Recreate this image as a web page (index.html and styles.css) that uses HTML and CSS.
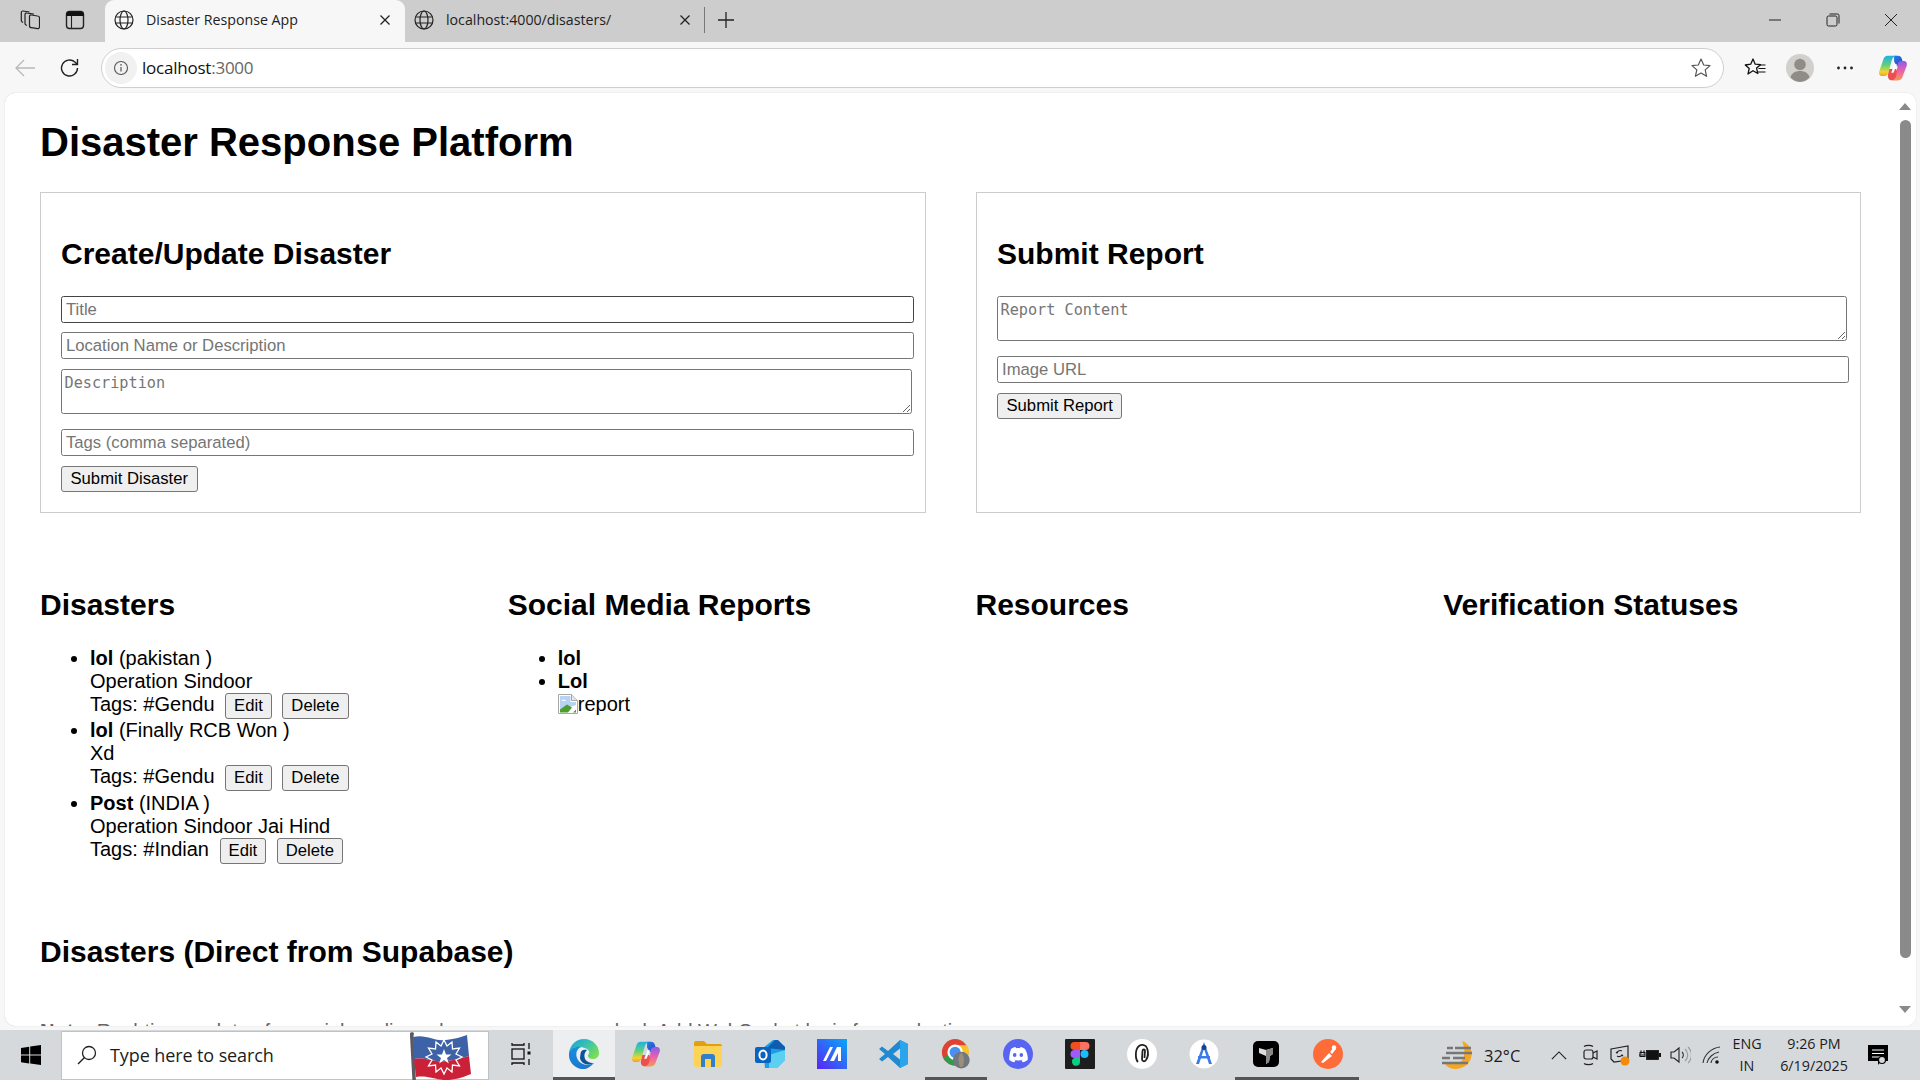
FILE: index.html
```html
<!DOCTYPE html>
<html lang="en">
<head>
<meta charset="utf-8">
<title>Disaster Response App</title>
<link rel="stylesheet" href="styles.css">
</head>
<body>
<svg class="defs" width="0" height="0" aria-hidden="true">
  <defs>
    <symbol id="globe" viewBox="0 0 20 20"><g fill="none" stroke="#222" stroke-width="1.2"><circle cx="10" cy="10" r="9"/><ellipse cx="10" cy="10" rx="4" ry="9"/><path d="M1.5 7h17M1.5 13h17"/></g></symbol>
    <symbol id="x" viewBox="0 0 12 12"><path d="M1.5 1.5l9 9M10.5 1.5l-9 9" fill="none" stroke="#222" stroke-width="1.3"/></symbol>
    <linearGradient id="cpL" x1="0" y1="0" x2="0" y2="1"><stop offset="0" stop-color="#1fb0e8"/><stop offset=".45" stop-color="#5fd07a"/><stop offset=".8" stop-color="#f2d52e"/><stop offset="1" stop-color="#f59a30"/></linearGradient>
    <linearGradient id="cpT" x1="0" y1="0" x2="1" y2="1"><stop offset="0" stop-color="#2a7de8"/><stop offset="1" stop-color="#2340c0"/></linearGradient>
    <linearGradient id="cpR" x1="0" y1="0" x2="0" y2="1"><stop offset="0" stop-color="#8a5ce8"/><stop offset=".5" stop-color="#e860b0"/><stop offset="1" stop-color="#f89a50"/></linearGradient>
    <symbol id="copilot" viewBox="0 0 28 28">
      <path d="M15 2.500h3.500c2 0 3.200 1 3.800 3l2 6.500h-7L15 8z" fill="url(#cpT)"/>
      <path d="M10 15h7l2.800 7c.8 2 0 3.500-2 3.500h-5.300c-2 0-3-1.500-3.300-3.500z" fill="#ec4f4f"/>
      <path d="M9 2.500h9c-3 0-4 1.500-5 4L9.500 19c-.5 1.500-1.500 2.500-3.500 2.500H4c-2.500 0-3.500-2-2.800-4.500L5 6c.7-2.300 2-3.500 4-3.500z" fill="url(#cpL)"/>
      <path d="M19 25.500h-7c3 0 4-1.500 5-4L18.500 10c.5-1.500 1.500-2.500 3.500-2.500h2c2.500 0 3.500 2 2.800 4.500L23 22c-.7 2.300-2 3.500-4 3.500z" fill="url(#cpR)"/>
      <path d="M15.500 10.500h2.200L14.500 18.500h-2.200z" fill="#fff"/>
    </symbol>
  </defs>
</svg>

<div class="tabbar">
  <div class="tabtools">
    <svg class="ico20" viewBox="0 0 20 20"><g fill="none" stroke="#222" stroke-width="1.2" stroke-linejoin="round"><path d="M9.500 6.500a1.500 1.500 0 0 1 1.800-1.500l6.200 1a2 2 0 0 1 2 2v8.500a2 2 0 0 1-2 2.200l-6-1a2 2 0 0 1-2-2z"/><path d="M6.800 15.500l-.8-.5a2 2 0 0 1-1-1.500V4.500a1.500 1.500 0 0 1 1.800-1.500l7 1.200"/><path d="M3 12.500l-1-.7a1.500 1.500 0 0 1-.7-1.300V2.500A1.500 1.500 0 0 1 3 1l6.500 1"/></g></svg>
    <svg class="ico20" viewBox="0 0 20 20"><rect x="1.500" y="1.500" width="17" height="17" rx="3" fill="none" stroke="#222" stroke-width="1.400"/><path d="M1.500 4.500a3 3 0 0 1 3-3h11a3 3 0 0 1 3 3v1.500h-17z" fill="#111"/><path d="M6.500 6v12" stroke="#222" stroke-width="1.100"/></svg>
  </div>
  <div class="tab tab-active">
    <svg class="ico20"><use href="#globe"/></svg>
    <span class="tab-title">Disaster Response App</span>
    <svg class="tabclose"><use href="#x"/></svg>
  </div>
  <div class="tab">
    <svg class="ico20"><use href="#globe"/></svg>
    <span class="tab-title">localhost:4000/disasters/</span>
    <svg class="tabclose"><use href="#x"/></svg>
  </div>
  <div class="tabsep"></div>
  <svg class="newtab" viewBox="0 0 18 18"><path d="M9 1v16M1 9h16" stroke="#222" stroke-width="1.300" fill="none"/></svg>
  <div class="winctl">
    <svg viewBox="0 0 14 14"><path d="M1 7h12" stroke="#222" stroke-width="1"/></svg>
    <svg viewBox="0 0 14 14"><g fill="none" stroke="#222" stroke-width="1"><rect x="1" y="3" width="10" height="10" rx="1.500"/><path d="M3.500 1h8a1.500 1.500 0 0 1 1.500 1.500v8"/></g></svg>
    <svg viewBox="0 0 14 14"><path d="M1 1l12 12M13 1L1 13" stroke="#222" stroke-width="1" fill="none"/></svg>
  </div>
</div>

<div class="toolbar">
  <svg class="tool tool-back" viewBox="0 0 22 22"><path d="M21 11H2M10 3l-8 8 8 8" fill="none" stroke="#b9b9b9" stroke-width="1.300"/></svg>
  <svg class="tool tool-reload" viewBox="0 0 22 22"><path d="M18.500 11a8 8 0 1 1-2.600-5.900L18.500 7.500M18.500 2v5.500H13" fill="none" stroke="#222" stroke-width="1.400"/></svg>
  <div class="omnibox">
    <span class="siteinfo"><svg viewBox="0 0 16 16"><circle cx="8" cy="8" r="6.500" fill="none" stroke="#555" stroke-width="1.100"/><path d="M8 7v4.500" stroke="#555" stroke-width="1.200"/><circle cx="8" cy="4.900" r=".8" fill="#555"/></svg></span>
    <span class="url">localhost<span class="url-port">:3000</span></span>
    <svg class="omni-star" viewBox="0 0 22 22"><path d="M11 2l2.700 6 6.300.6-4.800 4.300 1.400 6.400L11 16l-5.600 3.300 1.400-6.400L2 8.600 8.300 8z" fill="none" stroke="#555" stroke-width="1.200" stroke-linejoin="round"/></svg>
  </div>
  <div class="tool-right">
    <svg class="tr-fav" viewBox="0 0 22 22"><path d="M9 2l2.200 5.200 5.300.5-3.900 3.400 1.200 5.400L9 13.700 4 17l1.200-5.400L1.300 8l5.400-.8z" fill="none" stroke="#111" stroke-width="1.300" stroke-linejoin="round"/><path d="M15 8h6.500M14.500 11.500h7M14 15h7.500" stroke="#111" stroke-width="1.200"/></svg>
    <svg class="tr-profile" viewBox="0 0 28 28"><circle cx="14" cy="14" r="14" fill="#d2d0cc"/><circle cx="14" cy="10.500" r="5.800" fill="#8f8c87"/><path d="M4.500 23.500c1-4.500 5-6.500 9.500-6.500s8.500 2 9.500 6.500A14 14 0 0 1 14 28a14 14 0 0 1-9.500-4.500z" fill="#8f8c87"/></svg>
    <svg class="tr-dots" viewBox="0 0 18 4"><circle cx="2.500" cy="2" r="1.400" fill="#222"/><circle cx="9" cy="2" r="1.400" fill="#222"/><circle cx="15.500" cy="2" r="1.400" fill="#222"/></svg>
    <svg class="tr-copilot"><use href="#copilot"/></svg>
  </div>
</div>

<div class="viewport">
  <main class="page">
    <h1 class="page-title">Disaster Response Platform</h1>
    <div class="forms">
      <section class="card">
        <h2 class="card-title">Create/Update Disaster</h2>
        <input class="field field-dark" placeholder="Title">
        <input class="field" placeholder="Location Name or Description">
        <textarea class="area area-after" placeholder="Description"></textarea>
        <input class="field" placeholder="Tags (comma separated)">
        <button class="btn" type="button">Submit Disaster</button>
      </section>
      <section class="card">
        <h2 class="card-title">Submit Report</h2>
        <textarea class="area" placeholder="Report Content"></textarea>
        <input class="field" placeholder="Image URL">
        <button class="btn" type="button">Submit Report</button>
      </section>
    </div>
    <div class="columns">
      <section>
        <h2 class="col-title">Disasters</h2>
        <ul class="list list-actions">
          <li><strong>lol</strong> (pakistan )<br>Operation Sindoor<br>Tags: #Gendu <button class="btn btn-inline" type="button">Edit</button> <button class="btn btn-inline" type="button">Delete</button></li>
          <li><strong>lol</strong> (Finally RCB Won )<br>Xd<br>Tags: #Gendu <button class="btn btn-inline" type="button">Edit</button> <button class="btn btn-inline" type="button">Delete</button></li>
          <li><strong>Post</strong> (INDIA )<br>Operation Sindoor Jai Hind<br>Tags: #Indian <button class="btn btn-inline" type="button">Edit</button> <button class="btn btn-inline" type="button">Delete</button></li>
        </ul>
      </section>
      <section>
        <h2 class="col-title">Social Media Reports</h2>
        <ul class="list">
          <li><strong>lol</strong></li>
          <li><strong>Lol</strong><br><svg class="broken" viewBox="0 0 20 20"><path d="M.5.500h13l6 6v13H.5z" fill="#fff" stroke="#a8a8a8"/><path d="M13.500.500v6h6" fill="#e4e4e4" stroke="#a8a8a8"/><path d="M2 2h10.500v6H18v3L2 16z" fill="#b7d2f2"/><path d="M3 7c2-2 4-2 5 0z" fill="#fff"/><path d="M2 18.500v-3l7-5 5 3-4 5z" fill="#4c9c2e"/><path d="M15 18.500l3-3v3z" fill="#4c9c2e"/></svg>report</li>
        </ul>
      </section>
      <section><h2 class="col-title">Resources</h2></section>
      <section><h2 class="col-title">Verification Statuses</h2></section>
    </div>
    <h2 class="col-title direct-title">Disasters (Direct from Supabase)</h2>
    <p class="note"><strong>Note:</strong> Real-time updates for social media and resources are mocked. Add WebSocket logic for production.</p>
  </main>
  <div class="scrollbar">
    <span class="sb-up"></span>
    <span class="sb-thumb"></span>
    <span class="sb-down"></span>
  </div>
</div>

<footer class="taskbar">
  <div class="tb-start"><svg viewBox="0 0 20 20"><path d="M0 2.900l8.200-1.100v7.800H0zM9.200 1.600L20 0v9.600H9.200zM0 10.600h8.200v7.800L0 17.200zM9.200 10.600H20V20L9.200 18.500z" fill="#000"/></svg></div>
  <div class="tb-search">
    <svg class="tb-lens" viewBox="0 0 20 20"><circle cx="12" cy="8" r="6.500" fill="none" stroke="#222" stroke-width="1.300"/><path d="M7.500 12.500L1 19" stroke="#222" stroke-width="1.400"/></svg>
    <span class="tb-search-text">Type here to search</span>
    <svg class="tb-flag" viewBox="0 0 64 52">
      <path d="M3 2l2-1 2 1-.5 3L9 51H5.500L3 5z" fill="#5c5a60"/>
      <path d="M6 6c14-3 22 5 33 3 9-1 15-3 21-5l2 21c-7 2-13 4-22 5C28 32 20 26 7 28z" fill="#3d62a8"/>
      <path d="M7 28c13-2 21 4 33 2 9-1 15-3 22-5l2 18c-7 3-13 5-22 6C30 50 22 44 9 46z" fill="#cc2038"/>
      <path d="M37 9l3 6 5-4 .5 7 7-1-3.500 6 6 3-6 3 3.500 6-7-1-.5 7-5-4-3 6-3-6-5 4-.5-7-7 1 3.500-6-6-3 6-3-3.500-6 7 1 .5-7 5 4z" fill="none" stroke="#fff" stroke-width="1.300"/>
      <path d="M37 18l2 5.500h5.500L40 27l1.800 5.500L37 29l-4.800 3.500L34 27l-4.500-3.500H35z" fill="#fff"/>
    </svg>
  </div>
  <div class="tb-icon tb-taskview"><svg viewBox="0 0 22 24"><g fill="none" stroke="#111" stroke-width="1.300"><path d="M2 1v2h12V1M2 23v-2h12v2"/><rect x="2" y="7" width="12" height="10"/><path d="M19 1v6M19 17v6"/></g><rect x="17.500" y="9.500" width="3" height="3" fill="#111"/></svg></div>
  <div class="tb-icon tb-active tb-edge">
    <svg viewBox="0 0 30 30"><defs><linearGradient id="edgeA" x1="0" y1="0" x2="1" y2=".7"><stop offset="0" stop-color="#1f9fd8"/><stop offset=".5" stop-color="#35c1b4"/><stop offset="1" stop-color="#7cde52"/></linearGradient><linearGradient id="edgeB" x1="0" y1="0" x2="0" y2="1"><stop offset="0" stop-color="#1a8ee0"/><stop offset="1" stop-color="#1b78cc"/></linearGradient></defs>
      <path d="M15 0c9 0 15 7 15 14 0 4-3 6-6 6-3 0-5-1-5-3 0-2 2-3 1-5-2-3-6-4-10-4-5 0-8 3-10 6C1 6 7 0 15 0z" fill="url(#edgeA)"/>
      <path d="M0 14c2-5 7-7 12-6-5 2-6 8-3 13 3 5 10 6 16 3-4 4-7 6-10 6C6 30-1 23 0 14z" fill="url(#edgeB)"/>
      <path d="M11.500 15c0-4 3.500-5 6.500-4-2 2-3 4-2.500 7 .5 4 4.500 6 9.500 6-6 3-13 1-14-5z" fill="#0c5298"/>
    </svg>
  </div>
  <div class="tb-icon"><svg><use href="#copilot"/></svg></div>
  <div class="tb-icon"><svg viewBox="0 0 30 30"><path d="M1 4a2 2 0 0 1 2-2h8l3 3h13a2 2 0 0 1 2 2v3H1z" fill="#e0a010"/><path d="M1 7h28v19a2 2 0 0 1-2 2H3a2 2 0 0 1-2-2z" fill="#fcd257"/><path d="M8 28V18a3 3 0 0 1 3-3h8a3 3 0 0 1 3 3v10h-4v-8h-6v8z" fill="#2f80c8"/></svg></div>
  <div class="tb-icon"><svg viewBox="0 0 30 30"><path d="M8 9l10-8h4l8 7v13l-8 8H10z" fill="#1aa0e0"/><path d="M12 9l8-8h3l7 7v3z" fill="#0f5cb0"/><path d="M14 16l16-5v10l-8 8h-8z" fill="#5cd0f0"/><rect x="0" y="8" width="16" height="16" rx="2" fill="#0a63c0"/><ellipse cx="8" cy="16" rx="3.600" ry="4.600" fill="none" stroke="#fff" stroke-width="2"/></svg></div>
  <div class="tb-icon"><svg viewBox="0 0 30 30"><defs><linearGradient id="mA" x1="1" y1="0" x2="0" y2="1"><stop offset="0" stop-color="#08a8f8"/><stop offset="1" stop-color="#5a24f4"/></linearGradient></defs><rect width="30" height="30" fill="url(#mA)"/><path d="M6 22l7-14h3l-7 14zM13 22l7-14h4v14h-3V14l-4 8z" fill="#fff"/></svg></div>
  <div class="tb-icon"><svg viewBox="0 0 30 30"><path d="M21 1l8 4v20l-8 4-12-11-6 4.500L0 20l6-5-6-5 3-2.500L9 12z" fill="#1f8ad2"/><path d="M21 1l8 4v20l-8 4z" fill="#2aa4ea"/><path d="M21 9.500v11L14 15z" fill="#d5d9dc"/></svg></div>
  <div class="tb-icon tb-active-line">
    <svg viewBox="0 0 32 34"><circle cx="15" cy="15" r="15" fill="#dd4232"/><path d="M15 7h13.500A15 15 0 0 1 20 29z" fill="#f7c32c"/><path d="M15 15L1.500 21A15 15 0 0 0 18 29.700L22 20z" fill="#2c9e4b"/><circle cx="15" cy="15" r="7.500" fill="#4a8ff0" stroke="#fff" stroke-width="2.500"/><ellipse cx="22" cy="24" rx="9.500" ry="9.500" fill="#72777e"/><ellipse cx="22" cy="24" rx="3" ry="8" fill="#9b8e7c"/></svg>
  </div>
  <div class="tb-icon"><svg viewBox="0 0 30 30"><circle cx="15" cy="15" r="15" fill="#5865f2"/><path d="M8 10c2-1.500 4-2 4.500-2l.5 1.200c1.300-.2 2.700-.2 4 0l.5-1.200c.5 0 2.500.5 4.500 2 2 3.500 3 7 2.700 11-1.500 1.200-3.500 2-5 2.200l-1.200-1.800c.8-.3 1.300-.6 1.700-1-3 1.400-6.400 1.400-9.400 0 .4.400.9.700 1.700 1L11.300 23.200c-1.500-.2-3.500-1-5-2.200C6 17 7 13.500 8 10z" fill="#fff"/><ellipse cx="11.700" cy="16" rx="1.800" ry="2" fill="#5865f2"/><ellipse cx="18.300" cy="16" rx="1.800" ry="2" fill="#5865f2"/></svg></div>
  <div class="tb-icon"><svg viewBox="0 0 30 30"><rect width="30" height="30" rx="1" fill="#1e1e1e"/><path d="M9.500 3H15v8H9.500a4 4 0 0 1 0-8z" fill="#f24e1e"/><path d="M15 3h5.500a4 4 0 0 1 0 8H15z" fill="#ff7262"/><path d="M9.500 11H15v8H9.500a4 4 0 0 1 0-8z" fill="#a259ff"/><circle cx="19.500" cy="15" r="4" fill="#1abcfe"/><path d="M9.500 19H15v4a4 4 0 1 1-5.500-4z" fill="#0acf83"/></svg></div>
  <div class="tb-icon"><svg viewBox="0 0 30 30"><circle cx="15" cy="15" r="15" fill="#fff"/><path d="M11 23c-3-3-3-13 1-16 3-2 7-1 8 2 1.500 4 1 9-1 12-1.500 2-4 1.500-4-1l.5-8c.2-2 2.500-2 2.500 0l-.5 7" fill="none" stroke="#222" stroke-width="1.800"/></svg></div>
  <div class="tb-icon"><svg viewBox="0 0 30 30"><circle cx="15" cy="15" r="14.500" fill="#fff"/><path d="M15 3l-8 22h3l5-15 5 15h3z" fill="#3b7be8"/><path d="M9 17h12v2.500H9z" fill="#3b7be8"/><circle cx="15" cy="8.500" r="2.500" fill="#1e3f80"/></svg></div>
  <div class="tb-icon tb-active-line"><svg viewBox="0 0 30 30"><rect x="2" y="2" width="26" height="26" rx="5" fill="#000"/><path d="M8 9l7 2 7-2v6l-3 2-1 6-3 2v-8l-7-3z" fill="#ddd"/><path d="M15 11v14l3-2 1-6 3-2V9z" fill="#888"/></svg></div>
  <div class="tb-icon tb-active-line"><svg viewBox="0 0 30 30"><circle cx="15" cy="15" r="15" fill="#ff6c37"/><path d="M8 23l8-9 3 3-9 7zM17 13l4-5 2 2-4 5z" fill="#fff"/><circle cx="21" cy="8.500" r="2.200" fill="#fff"/></svg></div>
  <div class="tray">
    <svg class="tr-weather" viewBox="0 0 32 30"><path d="M20 1c8 3 11 10 9 17-2 7-9 11-16 11C7 29 3 25 2 22h14c3 0 6-2 6-6 1-5 0-10-2-15z" fill="#f5a623"/><path d="M5 8h6M13 8h16M4 13h26M0 18h8M11 18h12M0 23h26" stroke="#777" stroke-width="2.400" fill="none"/></svg>
    <span class="tr-temp">32°C</span>
    <svg class="tr-chev" viewBox="0 0 18 10"><path d="M1 9l8-8 8 8" fill="none" stroke="#222" stroke-width="1.300"/></svg>
    <svg class="tr-ic" viewBox="0 0 20 22"><g fill="none" stroke="#222" stroke-width="1.200"><rect x="4" y="6" width="9" height="9" rx="2"/><path d="M13 9l4-2v8l-4-2M4 2.500c2-1.500 7-1.500 9 0M4 19.500c2 1.500 7 1.500 9 0"/></g></svg>
    <svg class="tr-ic" viewBox="0 0 22 22"><path d="M2 5l17-3v14l-14 2-3-3z" fill="none" stroke="#222" stroke-width="1.200"/><path d="M13 7a3.500 3.500 0 0 0-5 2l-1-1M8 12a3.500 3.500 0 0 0 5-1l1 1" fill="none" stroke="#222" stroke-width="1.100"/><circle cx="16" cy="17" r="4.500" fill="#f58a07"/></svg>
    <svg class="tr-ic" viewBox="0 0 22 22"><rect x="7.500" y="6.500" width="12" height="9" fill="#111" stroke="#111" stroke-width=".8"/><rect x="20" y="9" width="2" height="4" fill="#111"/><path d="M0 11h6M2 6.500v3M5 6.500v3" stroke="#111" stroke-width="1.200"/><rect x="1" y="8.500" width="5" height="4" fill="none" stroke="#111"/></svg>
    <svg class="tr-ic" viewBox="0 0 22 22"><path d="M2 8h3l5-4v14l-5-4H2z" fill="none" stroke="#222" stroke-width="1.100"/><path d="M13 8a4 4 0 0 1 0 6" fill="none" stroke="#333" stroke-width="1.100"/><path d="M16 5a8 8 0 0 1 0 12M19 3a11 11 0 0 1 0 16" fill="none" stroke="#999" stroke-width="1.100"/></svg>
    <svg class="tr-ic tr-wifi" viewBox="0 0 22 22"><path d="M2 19C3 11 10 4 19 3M6 19c1-5 6-10 12-11M10 19c.5-3 3-6 7-6" fill="none" stroke="#333" stroke-width="1.100"/><circle cx="16" cy="18" r="1.800" fill="#111"/></svg>
    <div class="tr-lang"><span>ENG</span><span>IN</span></div>
    <div class="tr-clock"><span>9:26 PM</span><span>6/19/2025</span></div>
    <svg class="tr-notif" viewBox="0 0 22 22"><path d="M1 1h20v16H14l-3 4v-4H1z" fill="#000"/><path d="M5 6h12M5 9.500h12M5 13h8" stroke="#fff" stroke-width="1.200"/><circle cx="15" cy="16" r="3.500" fill="#d5d9dc" stroke="#000" stroke-width="1.200"/></svg>
  </div>
</footer>
</body>
</html>
```

FILE: styles.css
```css
* { box-sizing: border-box; }
html, body { height: 100%; }
body {
  margin: 0;
  height: 1080px;
  overflow: hidden;
  display: flex;
  flex-direction: column;
  background: #f7f7f7;
  font-family: "Liberation Sans", Arial, sans-serif;
  color: #000;
}
svg { display: block; flex: none; }
.defs { position: absolute; }
.ico20 { width: 20px; height: 20px; }

/* browser tab strip */
.tabbar {
  height: 42px;
  flex: none;
  display: flex;
  align-items: center;
  background: #cdcdcd;
  font-family: "Open Sans", sans-serif;
  font-size: 14.2px;
  color: #222;
}
.tabtools { display: flex; gap: 25px; padding: 0 0 2px 20px; width: 105px; }
.tab {
  width: 300px;
  height: 42px;
  padding: 0 14px 2px 9px;
  display: flex;
  align-items: center;
  gap: 12px;
  border-radius: 9px 9px 0 0;
}
.tab-active { background: #f7f7f7; }
.tab-title { flex: 1; white-space: nowrap; padding-bottom: 2px; }
.tabclose { width: 12px; height: 12px; }
.tabsep { width: 1px; height: 26px; background: #777; margin: 0 0 2px -1px; }
.newtab { width: 18px; height: 18px; margin: 0 0 2px 12px; }
.winctl { margin-left: auto; display: flex; gap: 44px; padding: 0 22px 2px 0; }
.winctl svg { width: 14px; height: 14px; }

/* browser toolbar */
.toolbar {
  height: 51px;
  flex: none;
  display: flex;
  align-items: center;
  background: #f7f7f7;
  padding-left: 14px;
}
.tool { width: 22px; height: 22px; }
.tool-reload { margin-left: 23px; }
.omnibox {
  margin-left: 20px;
  width: 1623px;
  height: 40px;
  display: flex;
  align-items: center;
  background: #fff;
  border: 1.5px solid #cfcfcf;
  border-radius: 20px;
  padding: 0 11px 0 3px;
}
.siteinfo {
  width: 32px;
  height: 32px;
  border-radius: 50%;
  background: #f1f1f1;
  display: flex;
  align-items: center;
  justify-content: center;
}
.siteinfo svg { width: 16px; height: 16px; }
.url { margin-left: 5px; font-family: "Open Sans", sans-serif; font-size: 17px; letter-spacing: -.23px; color: #111; }
.url-port { color: #666; }
.omni-star { margin-left: auto; width: 22px; height: 22px; }
.tool-right { display: flex; align-items: center; margin-left: 20px; }
.tr-fav { width: 22px; height: 22px; }
.tr-profile { width: 28px; height: 28px; margin-left: 20px; }
.tr-dots { width: 18px; height: 4px; margin-left: 22px; }
.tr-copilot { width: 30px; height: 30px; margin-left: 24px; }

/* page area */
.viewport {
  height: 933px;
  flex: none;
  margin: 0 4px 0 5px;
  display: flex;
  background: #fff;
  border-radius: 10px;
  overflow: hidden;
  box-shadow: 0 0 1px #bbb;
}
.page { flex: 1; min-width: 0; padding: 0 35px; overflow: hidden; }
.page-title { font-size: 40px; line-height: 46px; margin: 26px 0 27px; font-weight: 700; white-space: nowrap; }
.forms { display: grid; grid-template-columns: 886px 885px; gap: 50px; }
.card {
  border: 1.25px solid #ccc;
  padding: 24px 11px 20px 20px;
  height: 321px;
}
.card-title, .col-title { font-size: 30px; line-height: 34.5px; font-weight: 700; margin: 0; white-space: nowrap; }
.card-title { margin-bottom: 24px; margin-top: 20px; }
.field, .area {
  display: block;
  width: 100%;
  border: 1.25px solid #767676;
  border-radius: 2.500px;
  background: #fff;
  outline: none;
}
.field {
  height: 27px;
  padding: 2px 4px 1px;
  margin-bottom: 10px;
  font: 16.67px "Liberation Sans", Arial, sans-serif;
}
.field-dark { border-color: #444; margin-bottom: 9.500px; }
.area {
  width: calc(100% - 2px);
  height: 45px;
  padding: 4px 2.500px 3px;
  margin-bottom: 15px;
  font: 15.2px "DejaVu Sans Mono", monospace;
}
.area-after { margin-top: -.5px; }
.field::placeholder, .area::placeholder { color: #757575; opacity: 1; }
.btn {
  height: 26px;
  padding: 0 8.500px;
  background: #efefef;
  border: 1.25px solid #767676;
  border-radius: 3px;
  font: 16.67px "Liberation Sans", Arial, sans-serif;
  color: #000;
}
.btn-inline { margin-left: 5px; padding: 0 8px; }
.columns { display: grid; grid-template-columns: repeat(4, 417.75px); gap: 50px; margin-top: 75px; min-height: 346.5px; }
.list { margin: 24px 0 0; padding-left: 50px; font-size: 20px; line-height: 23px; }
.list-actions li { padding-bottom: .9px; }
.broken { display: inline-block; width: 20px; height: 20px; vertical-align: -3px; }
.direct-title { margin-top: 0; }
.note { margin: 51px 0 0; font-size: 20px; color: #666; line-height: 23px; white-space: nowrap; }

.scrollbar {
  width: 22px;
  flex: none;
  display: flex;
  flex-direction: column;
  align-items: center;
  padding-top: 10px;
  background: #fff;
}
.sb-up { width: 0; height: 0; border: 6.500px solid transparent; border-top: 0; border-bottom: 7px solid #8a8a8a; }
.sb-thumb { width: 11px; height: 838px; margin-top: 10px; background: #8a8a8a; border-radius: 6px; }
.sb-down { width: 0; height: 0; margin-top: 48px; border: 6.500px solid transparent; border-bottom: 0; border-top: 7px solid #8a8a8a; }

/* windows taskbar */
.taskbar {
  height: 50px;
  flex: none;
  margin-top: 4px;
  display: flex;
  align-items: center;
  background: #d5d9dc;
  font-family: "Open Sans", sans-serif;
  color: #1c1c1c;
}
.tb-start { width: 61px; display: flex; justify-content: center; }
.tb-start svg { width: 20px; height: 20px; }
.tb-search {
  width: 428px;
  height: 49px;
  display: flex;
  align-items: center;
  background: #fff;
  border: 1px solid #bfc3c6;
  padding-left: 15px;
  font-size: 18px;
  position: relative;
}
.tb-lens { width: 20px; height: 20px; }
.tb-search-text { margin-left: 13px; letter-spacing: -.1px; }
.tb-flag { position: absolute; left: 345px; top: -1px; width: 64px; height: 52px; }
.tb-icon {
  width: 62px;
  height: 50px;
  display: flex;
  align-items: center;
  justify-content: center;
  border-bottom: 3px solid transparent;
}
.tb-icon svg { width: 30px; height: 30px; }
.tb-taskview { width: 64px; }
.tb-taskview svg { width: 22px; height: 24px; }
.tb-active { background: #eceef0; border-bottom-color: #555; }
.tb-active-line { border-bottom-color: #555; }
.tray { flex: 1; display: flex; align-items: center; padding-left: 83px; min-width: 0; }
.tr-weather { width: 32px; height: 30px; }
.tr-temp { margin-left: 10px; font-size: 16.500px; width: 67px; }
.tr-chev { width: 16px; height: 9px; margin-right: 4px; }
.tr-ic { width: 22px; height: 22px; margin-left: 8px; }
.tr-wifi { margin-left: 10px; }
.tr-lang, .tr-clock { display: flex; flex-direction: column; align-items: center; font-size: 14.300px; line-height: 22px; }
.tr-lang { width: 44px; margin-left: 2px; }
.tr-clock { width: 76px; margin-left: 7px; }
.tr-notif { width: 22px; height: 22px; margin-left: 15px; }
```
